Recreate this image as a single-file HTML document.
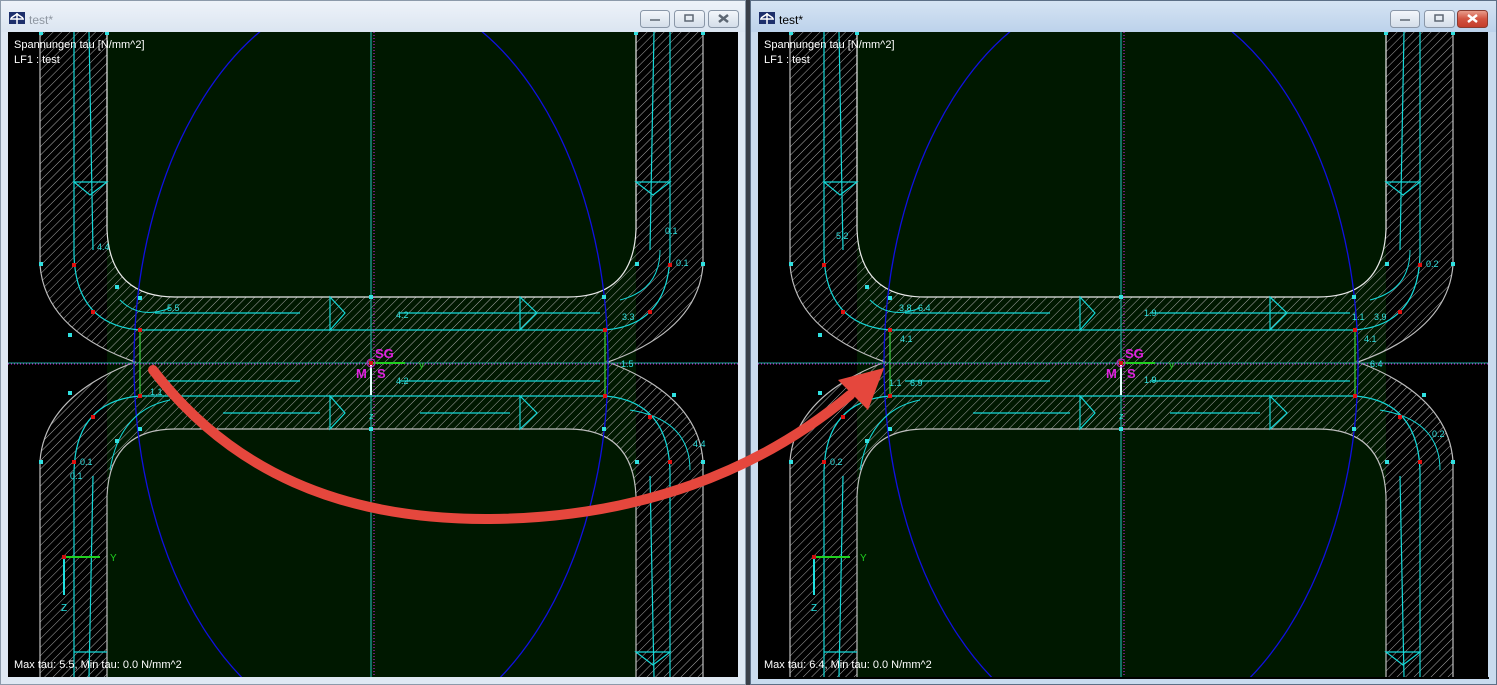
<!DOCTYPE html>
<html><head><meta charset="utf-8">
<style>
html,body{margin:0;padding:0;background:#dfe8f3;width:1497px;height:685px;overflow:hidden;font-family:"Liberation Sans",sans-serif}
svg{position:absolute;left:0;top:0;display:block}
</style></head><body>
<svg width="1497" height="685" viewBox="0 0 1497 685" xmlns="http://www.w3.org/2000/svg" font-family="Liberation Sans, sans-serif" overflow="hidden">
<defs>
<clipPath id="cv"><rect x="8" y="32" width="730" height="645"/></clipPath>
<pattern id="h" width="6" height="6" patternUnits="userSpaceOnUse" patternTransform="rotate(45)">
<line x1="0" y1="0" x2="0" y2="6" stroke="#a8a8a8" stroke-width="1"/>
</pattern>
<linearGradient id="tb1" x1="0" y1="0" x2="0" y2="1"><stop offset="0" stop-color="#eef3f9"/><stop offset="1" stop-color="#dbe5f1"/></linearGradient>
<linearGradient id="tb2" x1="0" y1="0" x2="0" y2="1"><stop offset="0" stop-color="#d6e4f3"/><stop offset="1" stop-color="#bcd2eb"/></linearGradient>
<linearGradient id="btn" x1="0" y1="0" x2="0" y2="1"><stop offset="0" stop-color="#f4f7fb"/><stop offset="1" stop-color="#d3dde9"/></linearGradient>
<linearGradient id="red" x1="0" y1="0" x2="0" y2="1"><stop offset="0" stop-color="#e9a190"/><stop offset="0.5" stop-color="#d25340"/><stop offset="1" stop-color="#c23b2a"/></linearGradient>
<g id="panel">
<g clip-path="url(#cv)">
<rect x="8" y="32" width="730" height="645" fill="#000"/>
<rect x="107" y="32" width="529" height="645" fill="#001800"/>
<path d="M40,32 V265 Q45,330 135,362 Q45,396 40,461 V677 H107 V496 Q110,429 175,429 H568 Q633,429 636,496 V677 H703 V461 Q698,396 608,362 Q698,330 703,265 V32 H636 V230 Q633,297 568,297 H175 Q110,297 107,230 V32 Z" fill="url(#h)"/>
<g fill="none" stroke="#bdbdbd" stroke-width="1.2">
<path d="M40,32 V265 Q45,330 135,362 Q45,396 40,461 V677"/>
<path d="M703,32 V265 Q698,330 608,362 Q698,396 703,461 V677"/>
<path d="M107,32 V230 Q110,297 175,297 H568 Q633,297 636,230 V32" stroke="#e8e8e8"/>
<path d="M107,677 V496 Q110,429 175,429 H568 Q633,429 636,496 V677"/>
</g>
<ellipse cx="371" cy="363" rx="237" ry="375" fill="none" stroke="#1010e0" stroke-width="1.3"/>
<g fill="none" stroke="#14d8d8" stroke-width="1.2">
<path d="M74,32 V255 Q76,325 140,330 H605 Q668,325 670,255 V32"/>
<path d="M74,677 V471 Q76,401 140,396 H605 Q668,401 670,471 V677"/>
<path d="M89,32 L93,250 M654,32 L650,250 M89,677 L93,476 M654,677 L650,476"/>
<path d="M74,182 H107 L90,195 Z M636,182 H670 L653,195 Z M636,652 H670 L653,665 Z M74,652 H107"/>
<path d="M330,297 V330 L345,313 Z M520,297 V330 L537,313 Z M330,396 V429 L345,413 Z M520,396 V429 L537,413 Z"/>
<path d="M155,313 H300 M400,313 H600 M155,381 H300 M400,381 H600 M223,413 H320 M420,413 H510"/>
<path d="M120,300 Q140,320 170,308 M110,470 Q120,410 170,400 M630,410 Q690,420 690,470 M620,300 Q660,290 660,250" stroke-width="1"/>
<path d="M140,330 V396 M605,330 V396" stroke="#3cd13c"/>
<path d="M371,32 V677" stroke="#1fa9a0"/>
<path d="M8,363 H738" stroke="#1fa9a0" stroke-width="1"/>
</g>
<path d="M374,32 V677 M8,364 H738" stroke="#e020e0" stroke-width="1" stroke-dasharray="1,2"/>
</g>
<path d="M371,363 H405" stroke="#20d020" stroke-width="2"/>
<path d="M371,363 V395" stroke="#e0ffff" stroke-width="2"/>
<circle cx="371" cy="363" r="4" fill="none" stroke="#d020d0"/>
<rect x="369" y="361" width="4" height="4" fill="#d01010"/>
<g fill="#30e0e0">
<rect x="39" y="262" width="4" height="4"/><rect x="115" y="285" width="4" height="4"/><rect x="138" y="296" width="4" height="4"/><rect x="68" y="333" width="4" height="4"/>
<rect x="369" y="295" width="4" height="4"/><rect x="369" y="427" width="4" height="4"/><rect x="602" y="295" width="4" height="4"/><rect x="635" y="262" width="4" height="4"/><rect x="701" y="262" width="4" height="4"/><rect x="672" y="393" width="4" height="4"/>
<rect x="39" y="460" width="4" height="4"/><rect x="115" y="439" width="4" height="4"/><rect x="138" y="427" width="4" height="4"/><rect x="68" y="391" width="4" height="4"/><rect x="602" y="427" width="4" height="4"/><rect x="635" y="460" width="4" height="4"/><rect x="701" y="460" width="4" height="4"/>
<rect x="39" y="32" width="4" height="3"/><rect x="105" y="32" width="4" height="3"/><rect x="634" y="32" width="4" height="3"/><rect x="701" y="32" width="4" height="3"/>
</g>
<g fill="#e01010">
<rect x="72" y="263" width="4" height="4"/><rect x="91" y="310" width="4" height="4"/><rect x="138" y="328" width="4" height="4"/><rect x="138" y="394" width="4" height="4"/><rect x="91" y="415" width="4" height="4"/><rect x="72" y="460" width="4" height="4"/>
<rect x="668" y="263" width="4" height="4"/><rect x="648" y="310" width="4" height="4"/><rect x="603" y="328" width="4" height="4"/><rect x="603" y="394" width="4" height="4"/><rect x="648" y="415" width="4" height="4"/><rect x="668" y="460" width="4" height="4"/>
</g>
<path d="M64,557 H100" stroke="#20d020" stroke-width="2"/>
<path d="M64,557 V595" stroke="#20e0e0" stroke-width="2"/>
<rect x="62" y="555" width="4" height="4" fill="#d01010"/>
<text x="110" y="561" fill="#20d020" font-size="10">Y</text>
<text x="61" y="611" fill="#20e0e0" font-size="10">Z</text>
<g font-size="13" font-weight="bold" fill="#e020e0"><text x="375" y="358">SG</text><text x="356" y="378">M</text><text x="377" y="378">S</text></g>
<text x="419" y="368" fill="#20d020" font-size="10">y</text>
<text x="369" y="419" fill="#30e0e0" font-size="9">z</text>
<g fill="#fff" font-size="11"><text x="14" y="48">Spannungen tau [N/mm^2]</text><text x="14" y="63">LF1 : test</text></g>
</g>
</defs>

<rect x="0" y="0" width="746" height="685" fill="#dfe8f3"/>
<rect x="0" y="0" width="746" height="32" fill="url(#tb1)"/>
<rect x="0.5" y="0.5" width="745" height="684" fill="none" stroke="#8c9aaa"/>
<rect x="750" y="0" width="747" height="685" fill="#c9dbee"/>
<rect x="750" y="0" width="747" height="32" fill="url(#tb2)"/>
<rect x="750.5" y="0.5" width="746" height="684" fill="none" stroke="#5c6f86"/>
<rect x="746" y="0" width="4" height="685" fill="#3a3f48"/>

<use href="#panel"/>
<use href="#panel" transform="translate(750,0)"/>
<rect x="758" y="677" width="731" height="2" fill="#000"/>

<g><rect x="9" y="12" width="16" height="12" fill="#1d2f6b"/><path d="M10,19 H24 M17,13 V24 M11,18 L17,14 L23,18" stroke="#fff" stroke-width="1.5" fill="none"/></g>
<text x="29" y="24" font-size="12" fill="#8e96a0">test*</text>
<g><rect x="759" y="12" width="16" height="12" fill="#1d2f6b"/><path d="M760,19 H774 M767,13 V24 M761,18 L767,14 L773,18" stroke="#fff" stroke-width="1.5" fill="none"/></g>
<text x="779" y="24" font-size="12" fill="#000">test*</text>

<g stroke="#8a97a8" fill="url(#btn)">
<rect x="640.5" y="10.5" width="29" height="17" rx="3"/><rect x="674.5" y="10.5" width="30" height="17" rx="3"/><rect x="708.5" y="10.5" width="30" height="17" rx="3"/>
<rect x="1390.5" y="10.5" width="29" height="17" rx="3"/><rect x="1424.5" y="10.5" width="30" height="17" rx="3"/>
</g>
<rect x="1457.5" y="10.5" width="30" height="17" rx="3" fill="url(#red)" stroke="#8a3b30"/>
<g stroke="#5d6773" fill="none" stroke-width="1.5">
<path d="M650,20 H660"/><rect x="685" y="15" width="8" height="6"/><path d="M719,15 L728,22 M728,15 L719,22" stroke-width="2.5"/>
<path d="M1400,20 H1410"/><rect x="1435" y="15" width="8" height="6"/>
</g>
<path d="M1468,15 L1477,22 M1477,15 L1468,22" stroke="#fff" stroke-width="2.5"/>

<g fill="#30e0e0" font-size="9">
<text x="97" y="250">4.4</text><text x="167" y="311">5.5</text><text x="396" y="318">4.2</text><text x="622" y="320">3.3</text><text x="665" y="234">0.1</text><text x="676" y="266">0.1</text><text x="621" y="367">1.5</text><text x="150" y="395">1.1</text><text x="396" y="384">4.2</text><text x="80" y="465">0.1</text><text x="70" y="479">0.1</text><text x="693" y="447">4.4</text>
<text x="836" y="239">5.2</text><text x="899" y="311">3.8</text><text x="918" y="311">6.4</text><text x="1144" y="316">1.9</text><text x="1352" y="320">1.1</text><text x="1374" y="320">3.9</text><text x="1426" y="267">0.2</text><text x="900" y="342">4.1</text><text x="1364" y="342">4.1</text><text x="889" y="386">1.1</text><text x="910" y="386">6.9</text><text x="1144" y="383">1.9</text><text x="1370" y="367">6.4</text><text x="830" y="465">0.2</text><text x="1432" y="437">0.2</text>
</g>
<g fill="#fff" font-size="11"><text x="14" y="668">Max tau: 5.5, Min tau: 0.0 N/mm^2</text><text x="764" y="668">Max tau: 6.4, Min tau: 0.0 N/mm^2</text></g>

<path d="M153,370 C230,470 340,520 490,519 C640,518 760,470 850,395" fill="none" stroke="#e5473d" stroke-width="10" stroke-linecap="round"/>
<path d="M884,368 L838,380 L868,410 Z" fill="#e5473d"/>
</svg>
</body></html>
